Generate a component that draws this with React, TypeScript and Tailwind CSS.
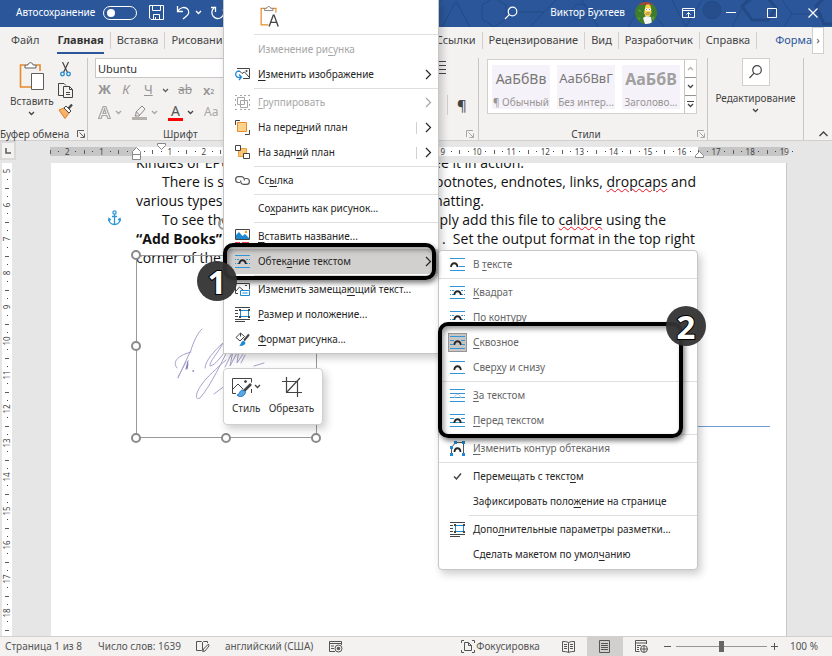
import type { ReactNode } from 'react'

const fontStack = "font-['Noto_Sans','Open_Sans',sans-serif]"

/* ── Small shared bits ── */

// "_" stands before the access-key letter
function Mnemonic({ text }: { text: string }) {
  const i = text.indexOf('_')
  if (i < 0) return <>{text}</>
  return (
    <>
      {text.slice(0, i)}
      <u className="underline-offset-2">{text[i + 1]}</u>
      {text.slice(i + 2)}
    </>
  )
}

function ChevronDown({ className = 'text-[#444]' }: { className?: string }) {
  return (
    <svg width="7" height="5" viewBox="0 0 7 5" className={`shrink-0 ${className}`} fill="none" stroke="currentColor" strokeWidth="1.3">
      <path d="M1 1l2.5 2.5L6 1" />
    </svg>
  )
}

function Launcher({ className = 'text-[#605e5c]' }: { className?: string }) {
  return (
    <svg width="8" height="8" viewBox="0 0 8 8" className={`shrink-0 ${className}`} fill="none" stroke="currentColor">
      <path d="M.5 7V.5H7M2.5 2.5L7 7M7.500 3.500v4h-4" />
    </svg>
  )
}

/* ── Text wrapping icons ── */

type WrapKind = 'inline' | 'square' | 'through' | 'topbottom' | 'behind' | 'front'

function WrapIcon({ kind }: { kind: WrapKind }) {
  const arch = kind === 'inline' ? 'M1 9c.5-5 6-5 6.500 0' : 'M4.300 9c.5-5 6-5 6.500 0'
  return (
    <svg width="15" height="13" viewBox="0 0 15 13" fill="none" stroke="#2f96d8">
      <path d="M0 .5h15M0 12.500h15" />
      {kind === 'inline' && <path d="M9 8.500h6" />}
      {kind === 'square' && <path d="M0 4.500h1M2 4.500h2M11 4.500h2M14 4.500h1M0 8.500h1M2 8.500h2M11 8.500h2M14 8.500h1" />}
      {kind === 'through' && <path d="M0 4.500h4M11 4.500h4M0 8.500h3M12 8.500h3" />}
      {kind === 'front' && <path d="M0 4.500h4M11 4.500h4M0 8.500h15" />}
      {kind === 'behind' && <path d="M0 4.500h15M0 8.500h15" />}
      <path d={arch} stroke={kind === 'behind' ? '#b9c4cc' : '#262626'} strokeWidth={kind === 'behind' ? 1 : 1.800} />
    </svg>
  )
}

function EditContourIcon() {
  return (
    <svg width="15" height="15" viewBox="0 0 15 15" fill="none">
      <path d="M1.500 13V6.500L5.500 1.500H13.500V13.500" stroke="#555" />
      <path d="M4.500 11c.3-5 5.700-5 6 0" stroke="#262626" strokeWidth="1.800" />
      <path d="M4 0h3v3H4zM12 0h3v3h-3zM0 5h3v3H0zM0 12h3v3H0zM12 12h3v3h-3z" fill="#1e88d0" />
    </svg>
  )
}

function SizePositionIcon() {
  return (
    <svg width="15" height="15" viewBox="0 0 15 15" fill="none">
      <path d="M0 .5h15M0 3.500h3M0 6.500h3M0 9.500h3M0 12.500h15M0 14.500h10" stroke="#444" />
      <path d="M5.500 3.500h8v6h-8z" stroke="#1e88d0" />
      <path d="M4 2h2v2H4zM13 2h2v2h-2zM4 9h2v2H4zM13 9h2v2h-2z" fill="#444" />
    </svg>
  )
}

/* ── Context menu icons ── */

const changePictureIcon = (
  <svg width="15" height="13" viewBox="0 0 15 13" fill="none">
    <path d="M2 .5h12.500v10H8" stroke="#444" />
    <path d="M4 2.500l3 3L9.500 4l4.500 5" stroke="#444" />
    <circle cx="11.500" cy="3" r="1" fill="#444" />
    <path d="M5 3.500C2 2.500.5 4.500.7 6.500.9 9 3 10 6 9M4 6.500L6.500 9 4 12" stroke="#1e88d0" strokeWidth="1.300" />
  </svg>
)

const groupIcon = (
  <svg width="15" height="15" viewBox="0 0 15 15" fill="none" stroke="#a6a6a6">
    <path d="M2.500 2.500h7v7h-7zM5.500 5.500h7v7h-7z" />
    <path d="M0 .5h2M13 .5h2M0 14.500h2M13 14.500h2M.5 4v2M.5 9v2M14.500 4v2M14.500 9v2M5 .5h2M9 .5h2M5 14.500h2M9 14.500h2" />
  </svg>
)

const bringFrontIcon = (
  <svg width="15" height="15" viewBox="0 0 15 15" fill="none">
    <path d="M5 .5H.5V5M10 14.500h4.500V10" stroke="#444" />
    <path d="M2.500 2.500h9v9h-9z" fill="#fbd38a" stroke="#e8892a" />
  </svg>
)

const sendBackIcon = (
  <svg width="15" height="15" viewBox="0 0 15 15" fill="none">
    <path d="M3.500 3.500h8v8h-8z" fill="#fbc56f" stroke="#e8a040" />
    <path d="M.5.5h5v5h-5zM8.500 8.500h6v5h-6z" fill="#fff" stroke="#444" />
  </svg>
)

const linkIcon = (
  <svg width="15" height="11" viewBox="0 0 15 11" fill="none" stroke="#555" strokeWidth="1.200">
    <path d="M5 7.500H3.500a2.900 2.900 0 010-5.800H6.500a2.900 2.900 0 012.700 3.800" />
    <path d="M10 3.500h1.500a2.900 2.900 0 010 5.800H8.500a2.900 2.900 0 01-2.700-3.800" />
  </svg>
)

const captionIcon = (
  <svg width="15" height="15" viewBox="0 0 15 15" fill="none">
    <path d="M.5.5h14v10H.5z" fill="#fff" stroke="#444" />
    <path d="M1 10V6l3-3 3.500 4L10 5l4 4v1z" fill="#1e88d0" />
    <circle cx="11" cy="3" r="1.300" fill="#f3a03a" />
    <path d="M0 13.500h5M7 13.500h7" stroke="#e8484d" />
  </svg>
)

const altTextIcon = (
  <svg width="15" height="13" viewBox="0 0 15 13" fill="none">
    <path d="M3 10.500H.5V.5h14v6" stroke="#444" />
    <path d="M1 8l3.500-4 4 3.500M10 2.500h2" stroke="#444" />
    <path d="M5.500 7.500h9v5h-9zM7.500 10h5" stroke="#1e88d0" />
  </svg>
)

const formatIcon = (
  <svg width="15" height="15" viewBox="0 0 15 15" fill="none">
    <path d="M1 5.500L5.500 1l4 3.500L5 9zM5.500 1v3.500" stroke="#444" />
    <path d="M14 2.500L9 8.500" stroke="#444" strokeWidth="2" />
    <path d="M4 13.500c2 0 1.500-4 4-4.500 2 0 3 1.500 2 3s-3.500 2.500-6 1.500z" fill="#1e88d0" />
  </svg>
)

/* ── Menus ── */

type Item = {
  text: string
  icon?: ReactNode
  arrow?: boolean
  split?: boolean
  disabled?: boolean
  muted?: boolean
  active?: boolean
  framed?: boolean
  sep?: 'full' | 'indent'
}

const contextItems: Item[] = [
  { text: 'Изменение ри_сунка', disabled: true },
  { text: '_Изменить изображение', icon: changePictureIcon, arrow: true, sep: 'indent' },
  { text: '_Группировать', icon: groupIcon, arrow: true, disabled: true },
  { text: 'На пере_дний план', icon: bringFrontIcon, arrow: true, split: true },
  { text: 'На задн_ий план', icon: sendBackIcon, arrow: true, split: true, sep: 'indent' },
  { text: 'Сс_ылка', icon: linkIcon, sep: 'indent' },
  { text: 'Со_хранить как рисунок...', sep: 'indent' },
  { text: '_Вставить название...', icon: captionIcon },
  { text: 'Обтек_ание текстом', icon: <WrapIcon kind="square" />, arrow: true, active: true, sep: 'indent' },
  { text: 'Изменить замеща_ющий текст...', icon: altTextIcon },
  { text: '_Размер и положение...', icon: <SizePositionIcon /> },
  { text: '_Формат рисунка...', icon: formatIcon },
]

const wrapItems: Item[] = [
  { text: 'В _тексте', icon: <WrapIcon kind="inline" />, muted: true, sep: 'full' },
  { text: '_Квадрат', icon: <WrapIcon kind="square" />, muted: true },
  { text: 'По конт_уру', icon: <WrapIcon kind="square" />, muted: true },
  { text: '_Сквозное', icon: <WrapIcon kind="through" />, muted: true, framed: true },
  { text: 'Свер_ху и снизу', icon: <WrapIcon kind="topbottom" />, muted: true, sep: 'full' },
  { text: '_За текстом', icon: <WrapIcon kind="behind" />, muted: true },
  { text: '_Перед текстом', icon: <WrapIcon kind="front" />, muted: true, sep: 'full' },
  { text: '_Изменить контур обтекания', icon: <EditContourIcon />, muted: true, sep: 'full' },
  {
    text: 'Перемещать с текст_ом',
    icon: (
      <svg width="9" height="9" viewBox="0 0 9 9" fill="none" stroke="#444" strokeWidth="1.500">
        <path d="M1 4.500L3.500 7 8 1.500" />
      </svg>
    ),
  },
  { text: 'Зафиксировать поло_жение на странице', sep: 'indent' },
  { text: 'Допо_лнительные параметры разметки...', icon: <SizePositionIcon /> },
  { text: 'Сделать макетом по умол_чанию' },
]

function MenuRow({ item }: { item: Item }) {
  const color = item.disabled ? 'text-[#a6a6a6]' : item.muted ? 'text-[#666]' : 'text-[#262626]'
  return (
    <li>
      <button
        type="button"
        role="menuitem"
        disabled={item.disabled}
        className={`flex h-[25px] w-full items-center pl-[10px] text-left ${color} ${item.active ? 'bg-[#d2d0ce]' : ''}`}
      >
        <span className={`flex h-[17px] w-[17px] items-center justify-center ${item.framed ? 'bg-[#c8c6c4] outline outline-1 outline-[#979593]' : ''}`}>
          {item.icon}
        </span>
        <span className="ml-[7px] flex-1 whitespace-nowrap"><Mnemonic text={item.text} /></span>
        {item.split && <span className="h-3 w-px bg-[#d0d0d0]" />}
        {item.arrow && (
          <svg width="7" height="11" viewBox="0 0 7 11" className="ml-2 mr-1.5 shrink-0" fill="none" stroke="currentColor" strokeWidth="1.200">
            <path d="M1 1l4.500 4.500L1 10" />
          </svg>
        )}
      </button>
      {item.sep && <div className={`my-px h-px bg-[#e1dfdd] ${item.sep === 'indent' ? 'ml-[30px]' : ''}`} />}
    </li>
  )
}

function Menu({ items }: { items: Item[] }) {
  return (
    <ul role="menu" className="text-[10px]">
      {items.map((item) => <MenuRow key={item.text} item={item} />)}
    </ul>
  )
}

/* ── Title bar ── */

function TitleBar() {
  return (
    <header className="relative flex h-[27px] shrink-0 items-center overflow-hidden bg-[#2b579a] pb-[2px] pl-4 text-[10px] text-white">
      <svg className="absolute inset-y-0 right-0 h-full w-[400px]" viewBox="0 0 400 27" preserveAspectRatio="xMaxYMid slice" fill="none" stroke="#234a86">
        <path d="M0 12l12-14M10 27l14-26 14 26M50 5l12-7 12 7v14l-12 8-12-8zM86 12h26l14-14M98 27l14-15M150 0l16 27M196 27l16-27 20 27M240 0l14 27 16-27M300 27l14-27M350 0l10 14-8 13M360 14h30" />
        <circle cx="280" cy="10" r="9" fill="#264e8c" />
        <circle cx="148" cy="12" r="8" />
        <path d="M310 6l10-8h16l8 10-8 12h-16zM384 6l8-8h14v26h-14z" strokeWidth="3" />
      </svg>
      <span id="autosave" className="relative">Автосохранение</span>
      <button type="button" role="switch" aria-checked="false" aria-labelledby="autosave" className="relative ml-2 flex h-[14px] w-[34px] items-center rounded-full border border-white pl-[3px]">
        <span className="h-2 w-2 rounded-full bg-white" />
      </button>
      <button type="button" aria-label="Сохранить" className="relative ml-3">
        <svg width="15" height="15" viewBox="0 0 15 15" fill="none" stroke="#fff">
          <path d="M.5.5h14v14H2L.5 13zM3.500.5v5h8v-5M4.500 14.500v-5h6v5M6.500 12v2.500" />
        </svg>
      </button>
      <button type="button" aria-label="Отменить" className="relative ml-3 flex items-center gap-1">
        <svg width="15" height="15" viewBox="0 0 15 15" fill="none" stroke="#fff" strokeWidth="1.300">
          <path d="M1.500 1v5.500H7M1.500 6.500C4 2.500 8 1.500 11 3.500c3.500 3 1.500 6-1 8L7 14" />
        </svg>
        <ChevronDown className="text-white" />
      </button>
      <button type="button" aria-label="Повторить" className="relative ml-2">
        <svg width="15" height="15" viewBox="0 0 15 15" fill="none" stroke="#fff" strokeWidth="1.300">
          <path d="M4 3A6 6 0 1013 4.500M1 2.500h4.500V7" />
        </svg>
      </button>

      <div className="relative ml-auto flex items-center">
        <button type="button" aria-label="Поиск" className="mr-8">
          <svg width="14" height="14" viewBox="0 0 14 14" fill="none" stroke="#fff" strokeWidth="1.200">
            <circle cx="8.500" cy="5.500" r="4.300" />
            <path d="M5.300 8.700L1 13" />
          </svg>
        </button>
        <span className="whitespace-nowrap">Виктор Бухтеев</span>
        <svg width="22" height="22" viewBox="0 0 22 22" className="ml-2.5">
          <defs><clipPath id="avatar"><circle cx="11" cy="11" r="11" /></clipPath></defs>
          <g clipPath="url(#avatar)">
            <path d="M0 0h22v22H0z" fill="#3f7d2c" />
            <path d="M0 0h22v3H0z" fill="#9c4a3c" />
            <path d="M3 9l2-2 1 3zM16 16l3-2v4zM3 15l2 1-1 2z" fill="#5da33c" />
            <path d="M10 6c0-5 6-5 6 0l.5 5-2 3.500h-4L9 11z" fill="#f7d046" />
            <path d="M8 16c2-2 5-2 8-1l1 7h-7z" fill="#f4f4f4" />
            <circle cx="11.500" cy="7.500" r="1.500" fill="#fff" />
            <circle cx="14.500" cy="7.500" r="1.500" fill="#fff" />
            <circle cx="11.500" cy="7.500" r=".4" />
            <circle cx="14.500" cy="7.500" r=".4" />
            <path d="M10 11.500c2-2 5-2 5.500 0 0 1.500-5 2.500-5.500 0z" fill="#c7a264" />
          </g>
        </svg>
        <div className="ml-[25px] mr-3.5 flex items-center gap-[31px]">
          <button type="button" aria-label="Параметры ленты">
            <svg width="13" height="10" viewBox="0 0 13 10" fill="none" stroke="#fff">
              <path d="M.5.5h12v9H.5zM.5 2.500h12M6.500 9V4.500M4.500 6.500l2-2 2 2" />
            </svg>
          </button>
          <button type="button" aria-label="Свернуть">
            <svg width="10" height="10" viewBox="0 0 10 10" stroke="#fff"><path d="M0 4.500h10" /></svg>
          </button>
          <button type="button" aria-label="Развернуть">
            <svg width="10" height="10" viewBox="0 0 10 10" fill="none" stroke="#fff"><path d="M.5.5h9v9h-9z" /></svg>
          </button>
          <button type="button" aria-label="Закрыть">
            <svg width="10" height="10" viewBox="0 0 10 10" stroke="#fff" strokeWidth="1.200"><path d="M.5.5l9 9M9.500.5l-9 9" /></svg>
          </button>
        </div>
      </div>
    </header>
  )
}

/* ── Ribbon ── */

const rightTabs = ['Ссылки', 'Рецензирование', 'Вид', 'Разработчик', 'Справка']

function Tabs() {
  return (
    <nav className="flex h-[27px] shrink-0 items-center justify-between overflow-hidden text-[11px] text-[#444]">
      <div className="flex items-center">
        <a href="#file" className="ml-[11px]">Файл</a>
        <a href="#home" className="ml-[18px] mt-[5px] border-b-2 border-[#2b579a] pb-[3px] font-bold text-[#333]">Главная</a>
        {['Вставка', 'Рисование'].map((t) => (
          <a key={t} href={`#${t}`} className="ml-1.5 border-l border-[#d2d0ce] pl-1.5">{t}</a>
        ))}
      </div>
      <div className="flex items-center">
        {rightTabs.map((t) => (
          <a key={t} href={`#${t}`} className="mr-1.5 border-r border-[#d2d0ce] pr-1.5">{t}</a>
        ))}
        <a href="#format" className="ml-3 text-[#2b579a]">Форма</a>
        <button type="button" aria-label="Далее" className="mr-2 flex h-[27px] w-3 items-center justify-center border border-[#d2d0ce] bg-white text-[10px]">›</button>
      </div>
    </nav>
  )
}

const clipboardShape = (
  <>
    <path d="M6 3H1.500v22H12M17 3h4v6" fill="none" stroke="#e8892a" strokeWidth="1.600" />
    <path d="M6 5V3h3c0-3 5-3 5 0h3v3H6z" fill="#fff" stroke="#605e5c" />
  </>
)

const styles = [
  { sample: 'АаБбВв', name: '¶ Обычный', cls: 'text-[14px] text-[#777]' },
  { sample: 'АаБбВвГ', name: 'Без интер...', cls: 'text-[13px] text-[#777]' },
  { sample: 'АаБбВ', name: 'Заголово...', cls: 'text-[16px] font-bold text-[#a0a0a0]' },
]

function Ribbon() {
  return (
    <section className="flex h-[87px] shrink-0 items-stretch border-b border-[#d2d0ce] pt-1 text-[10px] text-[#444]">
      {/* clipboard */}
      <div className="flex w-[88px] shrink-0 flex-col justify-between border-r border-[#c8c6c4]">
        <div className="flex justify-between pr-3.5">
          <button type="button" className="ml-2.5 flex flex-col items-center pt-1">
            <svg width="26" height="29" viewBox="0 0 26 29">
              {clipboardShape}
              <path d="M12.500 11.500h12v16h-12z" fill="#fff" stroke="#605e5c" />
            </svg>
            <span className="mt-1 leading-3">Вставить</span>
            <span className="mt-1"><ChevronDown /></span>
          </button>
          <div className="flex flex-col items-center gap-[6px] pt-1">
            <button type="button" aria-label="Вырезать">
              <svg width="11" height="15" viewBox="0 0 11 15" fill="none">
                <path d="M2.500 0l5 10.500M8.500 0l-5 10.500" stroke="#444" strokeWidth="1.200" />
                <circle cx="2.500" cy="12" r="1.800" stroke="#1e88d0" strokeWidth="1.300" />
                <circle cx="8.500" cy="12" r="1.800" stroke="#1e88d0" strokeWidth="1.300" />
              </svg>
            </button>
            <button type="button" aria-label="Копировать">
              <svg width="15" height="15" viewBox="0 0 15 15" fill="none" stroke="#444">
                <path d="M5 12.500H.5V.5h5.500l2 2M5.500 3.500h6l3 3v8h-9zM11.500 3.500v3h3M8 9.500h4M8 11.500h4" />
              </svg>
            </button>
            <button type="button" aria-label="Формат по образцу">
              <svg width="15" height="15" viewBox="0 0 15 15">
                <path d="M1 6l5-2 5 5-4 5.500z" fill="#f6b26b" stroke="#e07b1f" />
                <path d="M6 4l5 5 2-2-5-5z" fill="#fff" stroke="#444" />
                <path d="M10.500 4.500l3.500-4" stroke="#444" strokeWidth="2.200" />
              </svg>
            </button>
          </div>
        </div>
        <div className="flex items-center justify-between whitespace-nowrap pr-[2px] leading-3">
          Буфер обмена <Launcher />
        </div>
      </div>

      {/* font */}
      <div className="flex w-[350px] shrink-0 flex-col justify-between">
        <div className="ml-[7px]">
          <input aria-label="Шрифт" defaultValue="Ubuntu" className="block h-[20px] w-[160px] border border-[#c8c6c4] bg-white px-[2px] text-[11px] text-[#333]" />
          <div className="mt-[3px] flex h-[18px] items-center text-[13px] text-[#979593]">
            <button type="button" className="ml-[3px] w-3 font-bold">Ж</button>
            <button type="button" className="ml-3 w-2 italic">К</button>
            <button type="button" className="ml-3.5 w-2 underline">Ч</button>
            <span className="ml-2.5"><ChevronDown className="text-[#605e5c]" /></span>
            <button type="button" className="ml-2 w-4 text-[12px] line-through">ab</button>
            <button type="button" className="ml-2.5 flex items-end font-semibold leading-4">x<sub className="bottom-0 text-[7px] leading-3">2</sub></button>
          </div>
          <div className="mt-1 flex h-[18px] items-center text-[#a6a6a6]">
            <button type="button" aria-label="Текстовые эффекты" className="ml-[3px]">
              <svg width="13" height="13" viewBox="0 0 13 13" fill="none" stroke="#a6a6a6" strokeWidth="1.200"><path d="M.6 12.500L5.200.5h2.600l4.600 12h-2.600L8.800 9.500H4.200L3.200 12.500zM5 7.500h3L6.500 3z" /></svg>
            </button>
            <span className="ml-1"><ChevronDown className="text-[#a6a6a6]" /></span>
            <button type="button" aria-label="Цвет выделения" className="ml-2.5">
              <svg width="15" height="15" viewBox="0 0 15 15" fill="none" stroke="#888"><path d="M4 9l-1 2h4l6-7-3-3-6 6zM4.500 7l3 3" /><path d="M0 13.500h15" stroke="#b3b0ad" strokeWidth="3" /></svg>
            </button>
            <span className="ml-1"><ChevronDown className="text-[#a6a6a6]" /></span>
            <button type="button" className="ml-2.5 flex w-[15px] flex-col items-center border-b-[3px] border-[#f00] text-[14px] leading-[14px] text-[#555]">А</button>
            <span className="ml-1"><ChevronDown /></span>
            <button type="button" className="ml-2.5 text-[12px]">Aa</button>
          </div>
        </div>
        <span className="ml-[75px] leading-3">Шрифт</span>
      </div>

      {/* paragraph, mostly under the menu */}
      <div className="flex w-[41px] shrink-0 flex-col justify-between border-r border-[#c8c6c4] pr-1">
        <svg width="9" height="13" viewBox="0 0 9 13" className="mt-[3px]" stroke="#444"><path d="M0 .5h8M0 4.500h8M0 8.500h8M0 12.500h8" /></svg>
        <span className="ml-[9px] mt-2 border-l border-[#d2d0ce] pl-[9px] text-[15px] leading-5">¶</span>
        <span className="flex h-3 items-center self-end"><Launcher className="text-[#a6a6a6]" /></span>
      </div>

      {/* styles */}
      <div className="flex min-w-0 flex-1 flex-col justify-between border-r border-[#c8c6c4] pl-2">
        <div className="mr-2.5 mt-px flex h-[55px] border border-[#d2d0ce] bg-white">
          <div className="flex flex-1 items-center gap-[7px] pl-1">
            {styles.map((s) => (
              <button key={s.name} type="button" className="flex h-[44px] w-[58px] flex-col items-center justify-between bg-[#f6f2f9]">
                <span className={`flex h-7 items-center whitespace-nowrap ${s.cls}`}>{s.sample}</span>
                <span className="whitespace-nowrap leading-[14px] text-[#979593]">{s.name}</span>
              </button>
            ))}
          </div>
          <div className="flex w-3 flex-col border-l border-[#c8c6c4]">
            <button type="button" aria-label="Вверх" className="flex flex-1 items-center justify-center"><span className="rotate-180"><ChevronDown className="text-[#b3b0ad]" /></span></button>
            <button type="button" aria-label="Вниз" className="flex flex-1 items-center justify-center border-t border-[#979593]"><ChevronDown /></button>
            <button type="button" aria-label="Все стили" className="flex flex-1 flex-col items-center justify-center gap-px border-t border-[#979593]"><span className="h-px w-[7px] bg-[#444]" /><ChevronDown /></button>
          </div>
        </div>
        <div className="flex items-center justify-between pr-[2px] leading-3">
          <span className="flex-1 pr-3 text-center">Стили</span><Launcher className="text-[#a6a6a6]" />
        </div>
      </div>

      {/* editing */}
      <button type="button" className="flex w-24 shrink-0 flex-col items-center border-r border-[#c8c6c4]">
        <span className="flex h-[28px] w-[28px] items-center justify-center border border-[#d2d0ce] bg-white">
          <svg width="13" height="14" viewBox="0 0 13 14" fill="none" stroke="#444" strokeWidth="1.200"><circle cx="8" cy="5" r="4.300" /><path d="M5 8.200L.5 13" /></svg>
        </span>
        <span className="mt-1.5 leading-3">Редактирование</span>
        <span className="mt-1"><ChevronDown /></span>
      </button>
      <button type="button" aria-label="Свернуть ленту" className="flex w-[28px] shrink-0 items-end justify-end pb-[3px] pr-1">
        <svg width="9" height="6" viewBox="0 0 9 6" fill="none" stroke="#444" strokeWidth="1.400"><path d="M.5 5l4-4 4 4" /></svg>
      </button>
    </section>
  )
}

/* ── Rulers ── */

const hCells = Array.from({ length: 22 }, (_, i) => Math.abs(i - 2))
const vCells = Array.from({ length: 14 }, (_, i) => i + 5)

function HorizontalRuler() {
  return (
    <div className="flex h-[22px] shrink-0 items-start">
      <div className="flex h-[19px] w-4 items-center justify-center border-2 border-[#d8d8d8] bg-[#f3f2f1]">
        <svg width="6" height="6" viewBox="0 0 6 6" fill="none" stroke="#605e5c" strokeWidth="1.600"><path d="M1 0v5h5" /></svg>
      </div>
      <div className="relative ml-[30px] mr-[35px] mt-[6px] flex-1">
        <div className="absolute inset-y-0 left-1 right-3 flex">
          <span className="w-[86px] bg-[#c6c6c6]" />
          <span className="flex-1 bg-white" />
          <span className="w-[87px] bg-[#c6c6c6]" />
        </div>
        <div className="relative flex h-[9px] text-[8px] leading-none text-[#444]">
          {hCells.map((n, i) => (
            <div key={i} className="grid flex-1 grid-cols-4 place-items-center">
              <span className="h-1 w-px bg-[#605e5c]" />
              <span className="h-px w-px bg-[#444]" />
              <span className="flex w-0 justify-center">{n || ''}</span>
              <span className="h-px w-px bg-[#444]" />
            </div>
          ))}
        </div>
        <svg width="9" height="13" viewBox="0 0 9 13" className="absolute left-[86px] top-0" fill="#fff" stroke="#888"><path d="M.5 4.500l4-4 4 4v3h-8zM.5 7.500h8v5h-8z" /></svg>
        <svg width="9" height="7" viewBox="0 0 9 7" className="absolute -top-1 left-[111px]" fill="#fff" stroke="#888"><path d="M.5.5h8v2l-4 4-4-4z" /></svg>
        <svg width="9" height="7" viewBox="0 0 9 7" className="absolute right-[93px] top-1" fill="#fff" stroke="#888"><path d="M.5 6.500h8v-2l-4-4-4 4z" /></svg>
      </div>
    </div>
  )
}

function VerticalRuler() {
  return (
    <div className="ml-[2px] w-[10px] shrink-0 overflow-hidden bg-white pt-1 text-[8px] leading-none text-[#444]">
      {vCells.map((n) => (
        <div key={n} className="grid h-[34px] grid-rows-4 place-items-center">
          <span className="flex h-0 -rotate-90 items-center">{n}</span>
          <span className="h-px w-px bg-[#444]" />
          <span className="h-px w-1 bg-[#605e5c]" />
          <span className="h-px w-px bg-[#444]" />
        </div>
      ))}
    </div>
  )
}

/* ── Document page ── */

const misspelt = 'underline decoration-[#e81123] decoration-wavy decoration-1 underline-offset-1'

const lines: { left: ReactNode; right: ReactNode; cls: string }[] = [
  { left: 'Kindles or EPUB', right: 'to see it in action.', cls: 'w-[388px]' },
  { left: 'There is sup', right: <>footnotes, endnotes, links, <span className={misspelt}>dropcaps</span> and</>, cls: 'w-[560px] pl-[26px]' },
  { left: 'various types of', right: 'formatting.', cls: 'w-[348px]' },
  { left: 'To see the', right: <>simply add this file to <span className={misspelt}>calibre</span> using the</>, cls: 'w-[530px] pl-[26px]' },
  { left: <b>“Add Books”</b>, right: '. \u00a0Set the output format in the top right', cls: 'w-[559px]' },
  { left: 'corner of the', right: '', cls: 'w-[559px]' },
]

function Handle({ className }: { className: string }) {
  return <span className={`absolute h-[10px] w-[10px] rounded-full border-2 border-[#8a8a8a] bg-white ${className}`} />
}

function Page() {
  return (
    <main className="relative ml-[39px] mr-[45px] min-w-0 flex-1 overflow-hidden border-r border-[#c6c6c6] bg-white">
      <div className="-mt-[10px] pl-[85px] font-['Open_Sans',sans-serif] text-[14px] leading-[19px] text-[#111]">
        {lines.map((l, i) => (
          <p key={i} className={`flex justify-between whitespace-nowrap ${l.cls}`}>
            <span>{l.left}</span>
            <span>{l.right}</span>
          </p>
        ))}
      </div>

      <svg width="13" height="16" viewBox="0 0 13 16" className="absolute left-[57px] top-[47px]" fill="none" stroke="#2f96d8" strokeWidth="1.300">
        <circle cx="6.500" cy="2.500" r="1.600" />
        <path d="M6.500 4v10.500M4 6.500h5M1 9c0 3.500 2.500 5.500 5.500 5.500S12 12.500 12 9M.5 11L1 8.500 3 10M12.500 11L12 8.500 10 10" />
      </svg>

      {/* selected picture */}
      <div className="absolute left-[85px] top-[92px] h-[183px] w-[181px] border border-[#999]">
        <svg width="110" height="85" viewBox="0 0 110 85" className="absolute left-[30px] top-[67px]" fill="none" stroke="#a8a1cc" strokeLinecap="round">
          <path d="M35 6c-4 3-9 14-11 21l-13 28M10 45c-4-5-1-9 4-12 3-2 7-3 10-4M11 54l8-15" />
          <path d="M19 46l2-8M20 46l1-5" stroke="#7d73b5" />
          <path d="M26 48h.5" stroke="#7d73b5" strokeWidth="1.500" />
          <path d="M38 45c0-7 10-18 18-25-5 10-14 19-13 23 5 0 13-12 20-21-6 13-20 42-30 53-6 3-4-6 2-14 6-8 14-15 24-24" />
          <path d="M58 44l8-16-3 15 9-17-2 14 8-12M78 32l-4 8M47 71l12-9M87 43l10-3" />
        </svg>
        <Handle className="-left-[6px] -top-[6px]" />
        <Handle className="-left-[6px] top-[85px]" />
        <Handle className="-bottom-[6px] -left-[6px]" />
        <Handle className="-bottom-[6px] left-[84px]" />
        <Handle className="-bottom-[6px] -right-[5px]" />
        <span className="absolute -top-[38px] left-[81px] h-3 w-3 rounded-full border-2 border-[#999]" />
      </div>
      <div className="absolute left-[640px] top-[263px] h-px w-[79px] bg-[#6f9bd1]" />
    </main>
  )
}

/* ── Status bar ── */

function StatusBar() {
  return (
    <footer className="flex h-5 shrink-0 items-center whitespace-nowrap border-t border-[#d2d0ce] bg-[#f3f2f1] pl-[5px] text-[10px] text-[#555]">
      <span>Страница 1 из 8</span>
      <span className="ml-4">Число слов: 1639</span>
      <svg width="14" height="13" viewBox="0 0 14 13" className="ml-[15px]" fill="none" stroke="#555"><path d="M6.500 11.500l-1-1h-5v-9h5l1 1 1-1h4V3M6.500 2.500v8M12.500 4l-5 5-.5 2.500 2-.5 4-5z" /></svg>
      <span className="ml-[15px]">английский (США)</span>
      <svg width="14" height="13" viewBox="0 0 14 13" className="ml-4" fill="none" stroke="#555"><path d="M6 11.500H.5v-10h12V5M.5 3.500h12M2 6h3M2 8.500h3" /><circle cx="9.500" cy="8.500" r="3.500" /><circle cx="9.500" cy="8.500" r="1.300" fill="#555" /></svg>

      <button type="button" className="ml-auto flex items-center gap-px">
        <svg width="14" height="13" viewBox="0 0 14 13" fill="none" stroke="#555"><path d="M3 .5H.5V3M.5 10v2.500H3M11 .5h2.500V3M13.500 10v2.500H11M3.500 2.500h4l3 3v5h-7zM7.500 2.500v3h3" /></svg>
        Фокусировка
      </button>
      <button type="button" aria-label="Режим чтения" className="ml-[22px]">
        <svg width="13" height="12" viewBox="0 0 13 12" fill="none" stroke="#555"><path d="M6.500 1.500c-2-1-4-1-6-1v10c2 0 4 0 6 1 2-1 4-1 6-1V.5c-2 0-4 0-6 1zv10M2 3.500h3M2 5.500h3M2 7.500h3M8 3.500h3M8 5.500h3M8 7.500h3" /></svg>
      </button>
      <button type="button" aria-label="Разметка страницы" className="ml-3 flex h-[19px] w-9 items-center justify-center bg-[#d2d0ce]">
        <svg width="11" height="13" viewBox="0 0 11 13" fill="none" stroke="#555"><path d="M.5.5h10v12H.5zM2 3.500h7M2 5.500h7M2 7.500h7M2 9.500h7" /></svg>
      </button>
      <button type="button" aria-label="Веб-документ" className="ml-3">
        <svg width="13" height="13" viewBox="0 0 13 13" fill="none" stroke="#555"><path d="M4.500 11.500h-4v-11h11V4M.5 3h11M2 5.500h4M2 7.500h2M2 9.500h2" /><circle cx="9" cy="9" r="3.400" /><path d="M5.500 9h7M9 5.500v7" /></svg>
      </button>
      <button type="button" aria-label="Уменьшить" className="ml-4 flex w-2 justify-center">
        <span className="h-px w-[7px] bg-[#555]" />
      </button>
      <input
        type="range"
        aria-label="Масштаб"
        min={10}
        max={190}
        defaultValue={100}
        className="ml-1 h-[13px] w-[91px] appearance-none bg-transparent [&::-webkit-slider-runnable-track]:h-px [&::-webkit-slider-runnable-track]:bg-[#979593] [&::-webkit-slider-thumb]:-mt-[5px] [&::-webkit-slider-thumb]:h-[11px] [&::-webkit-slider-thumb]:w-[5px] [&::-webkit-slider-thumb]:appearance-none [&::-webkit-slider-thumb]:bg-[#666]"
      />
      <button type="button" aria-label="Увеличить" className="ml-1">
        <svg width="7" height="7" viewBox="0 0 7 7" stroke="#555"><path d="M0 3.500h7M3.500 0v7" /></svg>
      </button>
      <span className="ml-3 mr-3.5">100 %</span>
    </footer>
  )
}

/* ── Numbered callouts ── */

function Badge({ n, className }: { n: number; className: string }) {
  return (
    <span className={`absolute flex h-10 w-10 items-center justify-center rounded-full bg-[#333]/95 text-[33px] font-bold leading-none text-white [-webkit-text-stroke:2px_black] [paint-order:stroke_fill] ${className}`}>
      {n}
    </span>
  )
}

const frame = 'pointer-events-none absolute rounded-[10px] border-4 border-black shadow-[2px_3px_5px_rgba(0,0,0,0.5),inset_2px_3px_5px_rgba(0,0,0,0.4)]'

export default function App() {
  return (
    <div className={`relative flex h-screen flex-col overflow-hidden bg-[#f3f2f1] ${fontStack}`}>
      <TitleBar />
      <Tabs />
      <Ribbon />
      <div className="flex min-h-0 flex-1 flex-col bg-[#e6e6e6]">
        <HorizontalRuler />
        <div className="flex min-h-0 flex-1">
          <VerticalRuler />
          <Page />
        </div>
      </div>
      <StatusBar />

      {/* context menu */}
      <div className="absolute left-[223px] top-0 w-[216px] border border-t-0 border-[#c6c6c6] bg-white pb-px shadow-[3px_4px_8px_rgba(0,0,0,0.2)]">
        <button type="button" aria-label="Сохранить только текст" className="ml-9 mt-[6px] block">
          <svg width="19" height="22" viewBox="0 0 25 29">
            {clipboardShape}
            <path d="M11 9h14v19H11z" fill="#fff" />
            <path d="M12 27l5.500-15h1L24 27M14 21.500h8" fill="none" stroke="#444" strokeWidth="1.800" />
          </svg>
        </button>
        <div className="mb-0.5 ml-[30px] mt-[6px] h-px bg-[#e1dfdd]" />
        <Menu items={contextItems} />
      </div>

      {/* wrapping submenu */}
      <div className="absolute left-[438px] top-[250px] w-[260px] rounded-sm border border-[#c6c6c6] bg-white pb-0.5 pt-px shadow-[3px_4px_8px_rgba(0,0,0,0.2)]">
        <Menu items={wrapItems} />
      </div>

      {/* mini toolbar */}
      <div className="absolute left-[223px] top-[368px] flex h-[57px] w-[100px] justify-center gap-2 rounded-[4px] border border-[#d2d0ce] bg-white pt-[7px] text-[10px] text-[#333] shadow-[3px_4px_8px_rgba(0,0,0,0.2)]">
        <button type="button" className="flex flex-col items-center justify-start">
          <span className="flex h-[21px] items-center gap-px">
            <svg width="21" height="20" viewBox="0 0 21 20" fill="none" stroke="#444">
              <path d="M4 16.500H.5V1.500h19v4M1 12l5-5 5 5M19.500 12v4" />
              <circle cx="13.500" cy="4.500" r="1" fill="#444" />
              <path d="M19 7l-7 7" strokeWidth="2.600" />
              <path d="M5 18c3 0 2-5 6-5 3 1 3 3 1 5s-5 2-7 0z" fill="#5aa9e6" stroke="#1e6fb8" />
            </svg>
            <ChevronDown />
          </span>
          <span className="mt-1">Стиль</span>
        </button>
        <button type="button" className="flex flex-col items-center justify-start">
          <span className="flex h-[21px] items-center">
            <svg width="20" height="20" viewBox="0 0 20 20" fill="none" stroke="#444" strokeWidth="1.200"><path d="M4.500 0v15.500H20M0 4.500h15.500V20M4.500 15.500L18 1" /></svg>
          </span>
          <span className="mt-1">Обрезать</span>
        </button>
      </div>

      <div className={`left-[223px] top-[243px] h-[37px] w-[213px] ${frame}`} />
      <div className={`left-[438px] top-[322px] h-[116px] w-[245px] ${frame}`} />
      <Badge n={1} className="left-[197px] top-[261px]" />
      <Badge n={2} className="left-[666px] top-[306px]" />
    </div>
  )
}
